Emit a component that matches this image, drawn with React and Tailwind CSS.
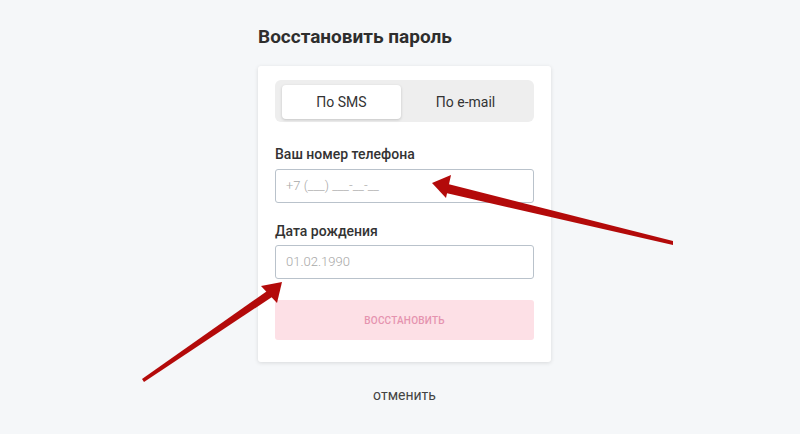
import React from "react";

export default function App() {
  const font = { fontFamily: "Roboto, 'Noto Sans', sans-serif" };

  return (
    <div className="relative w-[800px] h-[434px] bg-[#f5f7f9] overflow-hidden" style={font}>
      <div className="flex flex-col items-start pl-[258px] pt-[23px]">
        {/* title */}
        <h1 className="text-[19px] font-bold text-[#2e2e2e] leading-[28px] mb-[15px]">
          Восстановить пароль
        </h1>

        {/* card */}
        <div className="w-[293px] bg-white rounded-[3px] shadow-[0_1px_4px_rgba(0,0,0,0.12)] px-[17px] pt-[14px] pb-[22px]">
          {/* tabs */}
          <div className="flex bg-[#eeeeee] rounded-[6px] pl-[7px] pr-[4px] pt-[5px] pb-[3px] h-[42px]">
            <button className="w-[119px] bg-white rounded-[4px] shadow-[0_1px_3px_rgba(0,0,0,0.18)] text-[14px] text-[#333]">
              По SMS
            </button>
            <button className="flex-1 text-[14px] text-[#333]">По e-mail</button>
          </div>

          {/* phone */}
          <p className="mt-[22px] text-[14px] font-medium text-[#333] leading-[20px]">
            Ваш номер телефона
          </p>
          <div className="mt-[5px] h-[34px] border border-[#b9c2cb] rounded-[3px] flex items-center px-[10px] text-[13px] font-light text-[#a8a8a8]">
            +7 (___) ___-__-__
          </div>

          {/* birth date */}
          <p className="mt-[18px] text-[14px] font-medium text-[#333] leading-[20px]">
            Дата рождения
          </p>
          <div className="mt-[4px] h-[34px] border border-[#b9c2cb] rounded-[3px] flex items-center px-[10px] text-[13px] font-light text-[#a8a8a8]">
            01.02.1990
          </div>

          {/* submit */}
          <button className="mt-[21px] w-full h-[40px] bg-[#fde0e6] rounded-[3px] text-[10px] font-medium tracking-[0.2px] text-[#e593af]">
            ВОССТАНОВИТЬ
          </button>
        </div>

        {/* cancel */}
        <button className="mt-[23px] w-[293px] text-center text-[14px] text-[#444]">отменить</button>
      </div>

      {/* arrows drawn over the form */}
      <svg className="absolute inset-0 pointer-events-none" width="800" height="434" viewBox="0 0 800 434">
        <polygon points="673,241 673,245 446,193 448,184" fill="#b30a0a" />
        <polygon points="432,183 451,175 446,198" fill="#b30a0a" />
        <polygon points="142,379 144,382 275,295 270,289" fill="#b30a0a" />
        <polygon points="282,282 261,286 277,303" fill="#b30a0a" />
      </svg>
    </div>
  );
}
